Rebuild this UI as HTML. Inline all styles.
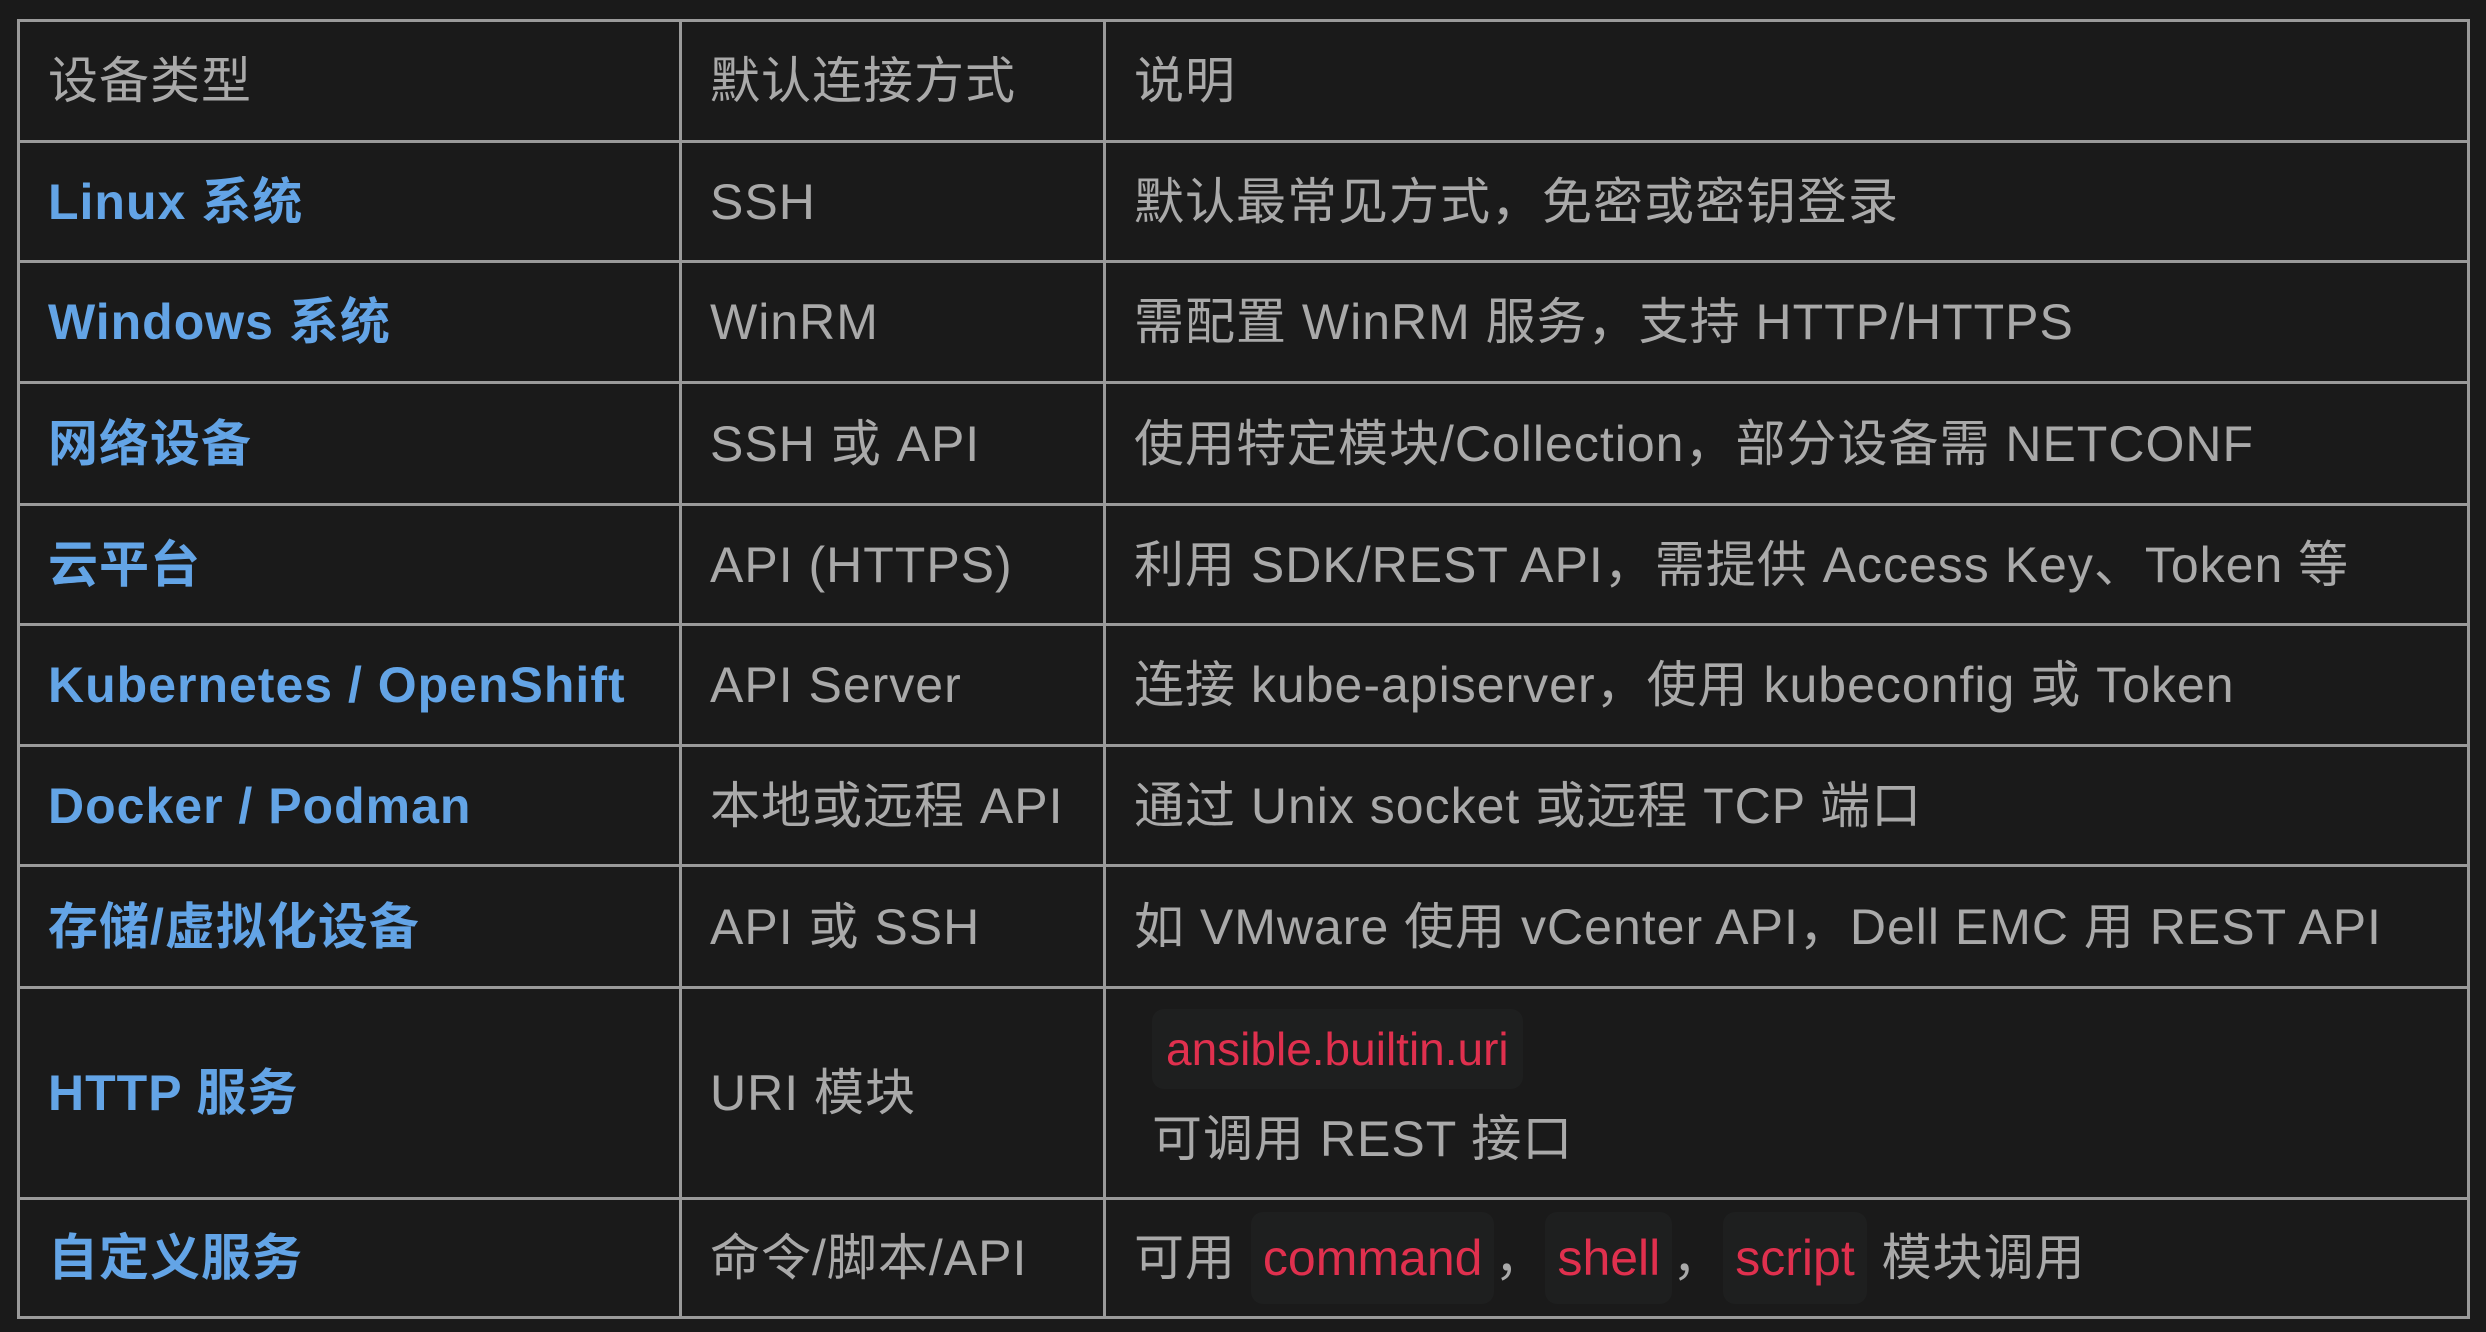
<!DOCTYPE html>
<html><head><meta charset="utf-8"><style>
html,body{margin:0;padding:0;background:#1a1a1a;width:2486px;height:1332px;overflow:hidden}
table{position:absolute;left:17px;top:19px;border-collapse:collapse;width:2453px;table-layout:fixed;font-family:"Liberation Sans","Noto Sans CJK SC",sans-serif;font-size:50px;letter-spacing:1px;color:#a9a9a9}
td{border:3px solid #9a9a9a;padding:0 28px;height:115px;white-space:nowrap;overflow:hidden;line-height:60px;vertical-align:middle}
td.k{color:#63a4e6;font-weight:bold}
code{font-family:"Liberation Sans","Noto Sans CJK SC",sans-serif;color:#e0304e;background:#1e1f1f;border-radius:12px;padding:18px 12px;letter-spacing:0}
</style></head><body>
<table>
<colgroup><col style="width:662px"><col style="width:424px"><col></colgroup>
<tr style="height:121px"><td>设备类型</td><td>默认连接方式</td><td>说明</td></tr>
<tr style="height:120px"><td class="k">Linux 系统</td><td>SSH</td><td>默认最常见方式，免密或密钥登录</td></tr>
<tr style="height:121px"><td class="k">Windows 系统</td><td>WinRM</td><td>需配置 WinRM 服务，支持 HTTP/HTTPS</td></tr>
<tr style="height:122px"><td class="k">网络设备</td><td>SSH 或 API</td><td>使用特定模块/Collection，部分设备需 NETCONF</td></tr>
<tr style="height:120px"><td class="k">云平台</td><td>API (HTTPS)</td><td>利用 SDK/REST API，需提供 Access Key、Token 等</td></tr>
<tr style="height:121px"><td class="k">Kubernetes / OpenShift</td><td>API Server</td><td>连接 kube-apiserver，使用 kubeconfig 或 Token</td></tr>
<tr style="height:120px"><td class="k">Docker / Podman</td><td>本地或远程 API</td><td>通过 Unix socket 或远程 TCP 端口</td></tr>
<tr style="height:122px"><td class="k">存储/虚拟化设备</td><td>API 或 SSH</td><td>如 VMware 使用 vCenter API，Dell EMC 用 REST API</td></tr>
<tr style="height:211px"><td class="k">HTTP 服务</td><td>URI 模块</td><td style="padding-left:46px;line-height:90px"><code style="font-size:46px;padding:14px 14px">ansible.builtin.uri</code><br>可调用 REST 接口</td></tr>
<tr style="height:119px"><td class="k">自定义服务</td><td>命令/脚本/API</td><td>可用 <code>command</code>，<code>shell</code>，<code>script</code> 模块调用</td></tr>
</table>
</body></html>
